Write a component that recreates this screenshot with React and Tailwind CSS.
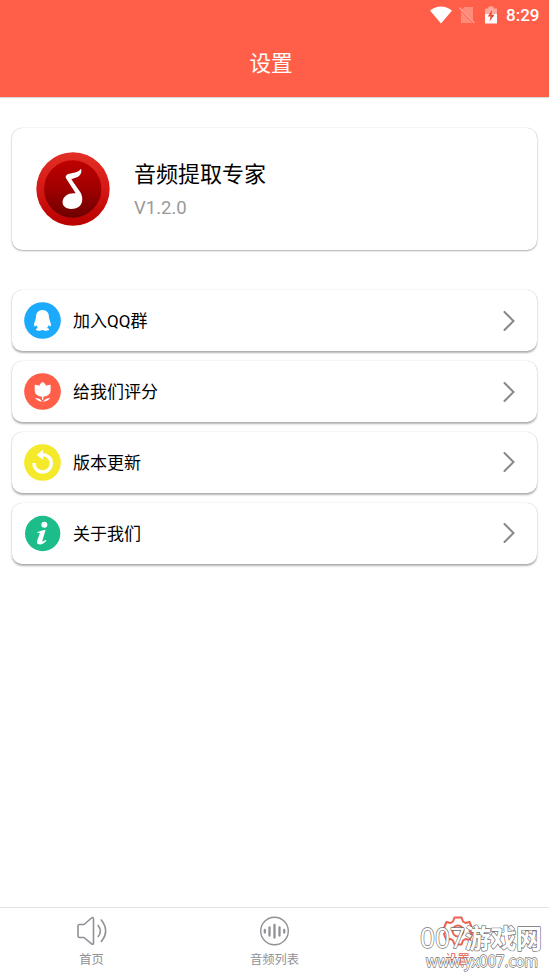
import React, { useState } from 'react';

const QQIcon = () => (
  <svg viewBox="0 0 111 111" className="w-[37px] h-[37px]">
    <circle cx="55.5" cy="55.5" r="55" fill="#1cabfc" />
    <path
      d="M55.5 24C43 24 36 33 36 46C36 50 34 53 33 58C30 64 29 70 31 73C34 73 36 71 37 69C38 73 40 76 42 78C36 79 34 83 37 85C42 87 51 87 55.5 83C60 87 69 87 74 85C77 83 75 79 69 78C71 76 73 73 74 69C75 71 77 73 80 73C82 70 81 64 78 58C77 53 75 50 75 46C75 33 68 24 55.5 24Z"
      fill="#fff"
    />
  </svg>
);

const FlowerIcon = () => (
  <svg viewBox="0 0 111 111" className="w-[37px] h-[37px]">
    <circle cx="55.5" cy="55.5" r="55" fill="#ff5f49" />
    <path
      d="M56 27C61 30 64 33 66 38C70 36 75 35 80 35C79 43 81 49 79 58C75 68 67 70 58 71V80H54V71C45 70 37 68 33 58C31 49 33 43 32 35C37 35 42 36 46 38C48 33 51 30 56 27Z"
      fill="#fff"
    />
    <path d="M33 74Q49 76 55 86Q40 84 33 74ZM79 74Q63 76 57 86Q72 84 79 74Z" fill="#fff" />
  </svg>
);

const UpdateIcon = () => (
  <svg viewBox="0 0 111 111" className="w-[37px] h-[37px]">
    <circle cx="55.5" cy="55.5" r="55" fill="#f4e92b" />
    <path d="M30 57A26 26 0 1 0 55 32" fill="none" stroke="#fff" strokeWidth="10" />
    <path d="M57 17V47L38 33Z" fill="#fff" />
  </svg>
);

const AboutIcon = () => (
  <svg viewBox="0 0 111 111" className="w-[37px] h-[37px]">
    <circle cx="56" cy="55.5" r="53" fill="#1dbd8b" />
    <circle cx="61" cy="29" r="9" fill="#fff" />
    <path
      d="M40 51C48 48 55 46 65 44L55 77C54 81 58 80 65 74L67 77C60 85 53 90 44 88C38 87 38 82 40 76L47 56C48 53 46 53 40 54Z"
      fill="#fff"
    />
  </svg>
);

const MENU = [
  { id: 'qq', label: '加入QQ群', icon: QQIcon },
  { id: 'rate', label: '给我们评分', icon: FlowerIcon },
  { id: 'update', label: '版本更新', icon: UpdateIcon },
  { id: 'about', label: '关于我们', icon: AboutIcon }
];

const SpeakerIcon = () => (
  <svg viewBox="0 0 30 30" className="w-[30px] h-[30px]" fill="none" stroke="currentColor" strokeWidth="1.6" strokeLinejoin="round" strokeLinecap="round">
    <path d="M1 10Q1 8.5 2.5 8.5H7L14.5 2Q16.5 .8 16.5 3V27Q16.5 29 14.5 27.8L7 21.5H2.5Q1 21.5 1 20Z" />
    <path d="M21.2 9.5Q25.5 15 21.2 20.5M24.3 4Q33 15 24.3 25.5" />
  </svg>
);

const WaveIcon = () => (
  <svg viewBox="0 0 30 30" className="w-[30px] h-[30px]" fill="none" stroke="currentColor" strokeLinecap="round">
    <circle cx="14.5" cy="15" r="13.8" strokeWidth="1.4" />
    <path d="M4.8 14V16.5M9.5 11.5V19.5M14.5 9V21.5M19.5 11.5V19.5M24.2 14V16.5" strokeWidth="2.3" />
  </svg>
);

const GearIcon = () => (
  <svg viewBox="0 0 30 30" className="w-[30px] h-[30px]" fill="none" stroke="currentColor" strokeWidth="2" strokeLinejoin="round">
    <path d="M11.5 1.5H18.5L20 5.5L22.5 7L26.500 6L29 12L26.5 15L29 18L26.5 24L22.5 23L20 24.5L18.5 28.5H11.5L10 24.5L7.5 23L3.5 24L1 18L3.5 15L1 12L3.5 6L7.5 7L10 5.5Z" />
    <circle cx="15" cy="15" r="5.5" />
  </svg>
);

const TABS = [
  { id: 'home', label: '首页', icon: SpeakerIcon },
  { id: 'list', label: '音频列表', icon: WaveIcon },
  { id: 'settings', label: '设置', icon: GearIcon }
];

const StatusBar = () => (
  <div className="h-[30px] flex items-center justify-end pr-[9px]">
    <svg viewBox="0 0 22 18" className="w-[22px] h-[18px]">
      <path d="M0 4.5Q11-3.5 22 4.5L11 17.5Z" fill="#fff" />
    </svg>
    <svg viewBox="0 0 16 18" className="w-4 h-[18px] ml-[7px]">
      <path d="M5.5 1H14V17H2V4.5Z" fill="#ff8b7b" />
      <path d="M0 2L15.5 17.5" stroke="#ff5f49" strokeWidth="2.2" />
      <path d="M0 1.5L15.5 17" stroke="#ffa193" strokeWidth="1.3" />
    </svg>
    <svg viewBox="0 0 12 18" className="w-3 h-[18px] ml-[10px]">
      <path d="M0 2.5H12V9H0Z" fill="#ffaa9e" />
      <path d="M3.5 .5H8.5V3H3.5Z" fill="#ffaa9e" />
      <path d="M0 8H12V17.5H0Z" fill="#fff" />
      <path d="M7 4L2.8 10.5H5.5L4.5 15.5L9.5 8.8H6.5Z" fill="#ef4832" />
    </svg>
    <span className="ml-[9px] w-[34px] text-[17px] leading-[30px] font-medium">8:29</span>
  </div>
);

const AppLogo = () => (
  <svg viewBox="31 30 222 222" className="w-[74px] h-[74px] shrink-0">
    <defs>
      <linearGradient id="ring" x1="0" y1="0" x2="0" y2="1">
        <stop offset="0" stopColor="#e23027" />
        <stop offset=".5" stopColor="#d51814" />
        <stop offset="1" stopColor="#b80000" />
      </linearGradient>
      <linearGradient id="disc" x1="0" y1="0" x2="0" y2="1">
        <stop offset="0" stopColor="#be0000" />
        <stop offset=".5" stopColor="#a00000" />
        <stop offset="1" stopColor="#6c0000" />
      </linearGradient>
    </defs>
    <circle cx="142" cy="141" r="110" fill="url(#ring)" />
    <circle cx="141" cy="141" r="86" fill="url(#disc)" />
    <path
      d="M166 80C170 91 163 104 149 107L137 112L164 151C176 172 171 201 137 201C118 201 109 190 111 177C113 162 130 151 150 154L121 109C118 103 121 98 130 95C144 92 158 91 166 80Z"
      fill="#fff"
    />
  </svg>
);

const Watermark = () => (
  <svg
    viewBox="0 0 129 58"
    className="absolute right-0 bottom-0 w-[129px] h-[58px] pointer-events-none [paint-order:stroke]"
    fill="#fff"
    stroke="#707070"
    strokeWidth="1.3"
    strokeLinejoin="round"
  >
    <text x="0" y="30" fontSize="27" className="font-['Open_Sans','Noto_Sans_CJK_SC',sans-serif]">
      <tspan textLength="45" lengthAdjust="spacingAndGlyphs">007</tspan>
      <tspan x="45" fontSize="26" textLength="77" className="font-bold">游戏网</tspan>
    </text>
    <text x="6" y="49" fontSize="16" textLength="112" lengthAdjust="spacingAndGlyphs" className="font-['Open_Sans',sans-serif]">www.yx007.com</text>
  </svg>
);

const App = () => {
  const [tab, setTab] = useState('settings');

  return (
    <div className="relative w-full h-screen flex flex-col overflow-hidden bg-white text-black font-[Roboto,'Noto_Sans_CJK_SC',sans-serif]">
      {/* Header */}
      <header className="h-[97px] shrink-0 bg-[#ff5f49] text-white shadow-[0_1px_1px_rgba(0,0,0,0.15)]">
        <StatusBar />
        <h1 className="h-[67px] text-center text-[21.5px] leading-[68px] font-normal pr-[7px]">设置</h1>
      </header>

      <main className="flex-1 pl-3 pr-3 pt-[31px]">
        {/* App info */}
        <section className="h-[122px] flex items-center rounded-[10px] bg-white pl-[24px] shadow-[0_1px_2px_rgba(0,0,0,0.3),0_0_1px_rgba(0,0,0,0.25)]">
          <AppLogo />
          <div className="ml-[24px] pt-[3px]">
            <h2 className="text-[22px] leading-[32px] font-normal">音频提取专家</h2>
            <p className="mt-[3px] text-[18.5px] leading-[28px] text-[#999]">V1.2.0</p>
          </div>
        </section>

        {/* Menu */}
        <div className="mt-[40.3px] flex flex-col gap-[9.8px]">
          {MENU.map(item => (
            <button
              key={item.id}
              className="h-[61px] w-full flex items-center rounded-[10px] bg-white pl-[12px] pr-[22px] text-left shadow-[0_1.5px_2px_rgba(0,0,0,0.3),0_0_1px_rgba(0,0,0,0.2)]"
            >
              <item.icon />
              <span className="ml-[12px] pt-px flex-1 text-[17px] leading-6">{item.label}</span>
              <svg viewBox="0 0 12 20" className="w-3 h-5" fill="none" stroke="#888" strokeWidth="2" strokeLinecap="round">
                <path d="M1.5 1L10.5 10L1.5 19" />
              </svg>
            </button>
          ))}
        </div>
      </main>

      {/* Bottom tabs */}
      <nav className="h-[69px] shrink-0 grid grid-cols-3 border-t border-[#e2e2e2] bg-white">
        {TABS.map(t => (
          <button
            key={t.id}
            onClick={() => setTab(t.id)}
            className={`flex flex-col items-center pt-[8px] ${tab === t.id ? 'text-[#ee6050]' : 'text-[#909096]'}`}
          >
            <t.icon />
            <span className="mt-[5px] text-[12.3px] leading-[18px]">{t.label}</span>
          </button>
        ))}
      </nav>

      <Watermark />
    </div>
  );
};

export default App;
